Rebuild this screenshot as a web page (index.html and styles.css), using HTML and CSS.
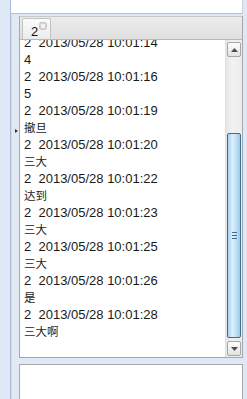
FILE: index.html
```html
<!DOCTYPE html>
<html lang="zh-CN">
<head>
    <meta charset="UTF-8">
    <title>chat</title>
    <link rel="stylesheet" href="styles.css">
</head>
<body>
    <div class="app">
        <div class="west"></div>
        <div class="main">
            <div class="north"></div>
            <div class="middle">
                <div class="splitter"><span class="mini-arrow"></span></div>
                <div class="center-col">
                    <div class="center">
                        <div class="tabbar">
                            <div class="tab">
                                <span class="tab-title">2</span>
                                <svg class="tab-close" width="8" height="8" viewBox="0 0 8 8">
                                    <rect x="0.5" y="0.5" width="7" height="7" rx="2" fill="#d4d4d4" stroke="#c4c4c4"/>
                                    <path d="M2.3 2.3 L5.7 5.7 M5.7 2.3 L2.3 5.7" stroke="#fff" stroke-width="1.3"/>
                                </svg>
                            </div>
                        </div>
                        <div class="body">
                            <div class="messages">
                                <div class="lines">
                                    <div class="meta">2  2013/05/28 10:01:14</div>
                                    <div class="msg">4</div>
                                    <div class="meta">2  2013/05/28 10:01:16</div>
                                    <div class="msg">5</div>
                                    <div class="meta">2  2013/05/28 10:01:19</div>
                                    <div class="msg cjk">撤旦</div>
                                    <div class="meta">2  2013/05/28 10:01:20</div>
                                    <div class="msg cjk">三大</div>
                                    <div class="meta">2  2013/05/28 10:01:22</div>
                                    <div class="msg cjk">达到</div>
                                    <div class="meta">2  2013/05/28 10:01:23</div>
                                    <div class="msg cjk">三大</div>
                                    <div class="meta">2  2013/05/28 10:01:25</div>
                                    <div class="msg cjk">三大</div>
                                    <div class="meta">2  2013/05/28 10:01:26</div>
                                    <div class="msg cjk">是</div>
                                    <div class="meta">2  2013/05/28 10:01:28</div>
                                    <div class="msg cjk">三大啊</div>
                                </div>
                            </div>
                            <div class="scrollbar">
                                <div class="sb-btn">
                                    <svg width="7" height="4" viewBox="0 0 7 4"><path d="M0 4 L3.5 0 L7 4 Z" fill="#4d4d4d"/></svg>
                                </div>
                                <div class="sb-track">
                                    <div class="sb-thumb">
                                        <span class="grip"></span>
                                    </div>
                                </div>
                                <div class="sb-btn">
                                    <svg width="7" height="4" viewBox="0 0 7 4"><path d="M0 0 L7 0 L3.5 4 Z" fill="#4d4d4d"/></svg>
                                </div>
                            </div>
                        </div>
                    </div>
                    <div class="south"></div>
                </div>
            </div>
        </div>
    </div>
</body>
</html>
```

FILE: styles.css
```css
body {
    margin: 0;
    background-color: #dfe8f6;
    font-family: "Liberation Sans", Arial, "Noto Sans CJK SC", sans-serif;
    overflow: hidden;
}
.app {
    display: flex;
    height: 399px;
}
.west {
    width: 10px;
    border-right: 1px solid #a9bcd6;
    background-color: #dfe8f6;
}
.main {
    flex: 1;
    display: flex;
    flex-direction: column;
    padding-right: 4px;
}
.north {
    height: 13px;
    background-color: #fff;
    border-right: 1px solid #c9d2de;
    border-bottom: 1px solid #b3bfcf;
    margin-bottom: 2px;
}
.middle {
    flex: 1;
    display: flex;
}
.splitter {
    width: 8px;
    display: flex;
    align-items: flex-start;
    background-color: #e3e9f2;
    border-left: 1px solid #d4dce8;
    box-sizing: border-box;
}
.mini-arrow {
    margin-top: 113px;
    margin-left: 3px;
    width: 0;
    height: 0;
    border-top: 2px solid transparent;
    border-bottom: 2px solid transparent;
    border-left: 3px solid #333;
}
.center-col {
    flex: 1;
    display: flex;
    flex-direction: column;
}
.center {
    height: 342px;
    display: flex;
    flex-direction: column;
    border-left: 1px solid #a8a8a8;
    border-right: 1px solid #a8a8a8;
    border-bottom: 1px solid #a8a8a8;
    box-sizing: border-box;
}
.tabbar {
    height: 24px;
    display: flex;
    align-items: flex-end;
    padding-left: 2px;
    background: linear-gradient(#ececec, #e0e0e0);
    border-top: 1px solid #c8c8c8;
    border-bottom: 1px solid #b8b8b8;
    box-sizing: border-box;
}
.tab {
    height: 21px;
    display: flex;
    align-items: flex-start;
    padding: 0 3px 0 8px;
    gap: 1px;
    box-sizing: border-box;
    background: linear-gradient(#fbfbfb, #ececec);
    border: 1px solid #c2c2c2;
    border-bottom: none;
    border-radius: 2px 2px 0 0;
}
.tab-title {
    font-size: 13px;
    line-height: 13px;
    color: #111;
    margin-top: 6px;
}
.tab-close {
    flex: none;
    margin-top: 3px;
}
.body {
    flex: 1;
    display: flex;
    min-height: 0;
}
.messages {
    flex: 1;
    overflow: hidden;
    background-color: #fff;
    padding-left: 4px;
}
.lines {
    margin-top: -6px;
    font-size: 13px;
    line-height: 17px;
    color: #1a1a1a;
}
.meta {
    white-space: pre;
}
.cjk {
    font-size: 11.5px;
    font-family: "Noto Sans CJK SC", sans-serif;
}
.scrollbar {
    width: 17px;
    display: flex;
    flex-direction: column;
    padding: 2px 1px 1px 1px;
    box-sizing: border-box;
    background: linear-gradient(to right, #e6e6e6, #f2f2f2 40%, #ececec);
    border-left: 1px solid #e0e0e0;
}
.sb-btn {
    height: 15px;
    display: flex;
    align-items: center;
    justify-content: center;
    box-sizing: border-box;
    border: 1px solid #a6a6a6;
    border-radius: 2px;
    background: linear-gradient(#fdfdfd, #e2e2e2);
}
.sb-track {
    flex: 1;
    display: flex;
    flex-direction: column;
}
.sb-thumb {
    margin-top: 76px;
    height: 205px;
    display: flex;
    align-items: center;
    justify-content: center;
    box-sizing: border-box;
    border: 1px solid #3c6c98;
    border-radius: 2px;
    background: linear-gradient(to right, #a8d0f0, #dff0fc 40%, #c8e4f8 60%, #9ccaee);
}
.grip {
    width: 5px;
    height: 5px;
    border-top: 1px solid #3b6c97;
    border-bottom: 1px solid #3b6c97;
    background: linear-gradient(transparent 2px, #3b6c97 2px, #3b6c97 3px, transparent 3px);
}
.south {
    margin-top: 6px;
    flex: 1;
    background-color: #fff;
    border-top: 1px solid #a8a8a8;
    border-left: 1px solid #a8a8a8;
    border-right: 1px solid #a8a8a8;
}
```
